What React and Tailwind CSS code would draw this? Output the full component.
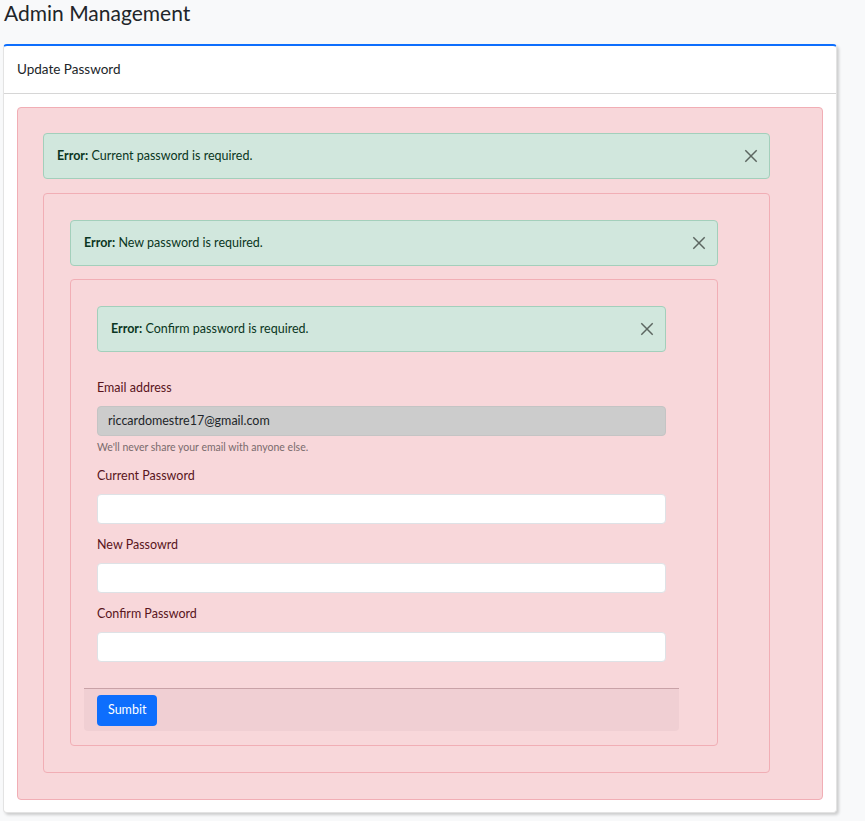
const font = { fontFamily: '"Lato", "Noto Sans", sans-serif' };

function CloseIcon() {
  return (
    <svg width="14" height="14" viewBox="0 0 16 16" fill="none" stroke="currentColor" strokeWidth="1.7">
      <line x1="1.5" y1="1.5" x2="14.5" y2="14.5" />
      <line x1="14.5" y1="1.5" x2="1.5" y2="14.5" />
    </svg>
  );
}

function ErrorAlert({ message }) {
  return (
    <div className="flex items-center justify-between h-[46px] pl-[13px] pr-[11px] bg-[#d1e7dd] border border-[#a3cfbb] rounded text-[12.5px] text-[#0a3622]">
      <p>
        <span className="font-bold">Error:</span> {message}
      </p>
      <button className="text-[#5c6661]">
        <CloseIcon />
      </button>
    </div>
  );
}

function Field({ label, children }) {
  return (
    <div className="mb-[12px]">
      <label className="block text-[12.5px] leading-[18px] text-[#58151c] mb-[9px]">{label}</label>
      {children}
    </div>
  );
}

function PasswordForm() {
  return (
    <form className="mt-[27px]">
      <Field label="Email address">
        <div className="h-[30px] flex items-center px-[10px] bg-[#cccccc] border border-[#c4c4c4] rounded text-[12.5px] text-[#212529]">
          riccardomestre17@gmail.com
        </div>
        <p className="mt-[3px] mb-[3px] leading-[16px] text-[10.5px] text-[#7a6b6d]">We'll never share your email with anyone else.</p>
      </Field>
      <Field label="Current Password">
        <input type="password" className="block w-full h-[30px] bg-white border border-[#dee2e6] rounded" />
      </Field>
      <Field label="New Passowrd">
        <input type="password" className="block w-full h-[30px] bg-white border border-[#dee2e6] rounded" />
      </Field>
      <Field label="Confirm Password">
        <input type="password" className="block w-full h-[30px] bg-white border border-[#dee2e6] rounded" />
      </Field>
      <div className="-mx-[13px] mt-[26px] px-[13px] pt-[6px] h-[43px] bg-[#f0cfd3] border-t border-[#c9a2a7] rounded-b">
        <button type="button" className="h-[31px] px-[11px] bg-[#0d6efd] text-white text-[12.5px] rounded">
          Sumbit
        </button>
      </div>
    </form>
  );
}

export default function App() {
  return (
    <div className="min-h-[821px] bg-[#f8f9fa] pl-[3px] pr-[28px]" style={font}>
      <h1 className="text-[21px] leading-[26px] text-[#212529] pl-[1px] mb-[18px]">Admin Management</h1>

      {/* Card */}
      <div className="bg-white border border-[#e3e3e3] border-t-2 border-t-[#0d6efd] rounded shadow-[2px_2px_3px_rgba(0,0,0,0.18)]">
        <div className="h-[48px] flex items-center px-[13px] border-b border-[#d6d6d6] text-[13.5px] text-[#212529]">
          Update Password
        </div>

        <div className="px-[13px] pt-[13px] pb-[12px]">
          <div className="bg-[#f8d7da] border border-[#f1aeb5] rounded pt-[25px] pl-[25px] pr-[52px] pb-[26px]">
            <ErrorAlert message="Current password is required." />
            <div className="mt-[14px] bg-[#f8d7da] border border-[#f1aeb5] rounded pt-[26px] pl-[26px] pr-[51px] pb-[26px]">
              <ErrorAlert message="New password is required." />
              <div className="mt-[13px] bg-[#f8d7da] border border-[#f1aeb5] rounded pt-[26px] pl-[26px] pr-[51px] pb-[14px]">
                <ErrorAlert message="Confirm password is required." />
                <PasswordForm />
              </div>
            </div>
          </div>
        </div>
      </div>
    </div>
  );
}
